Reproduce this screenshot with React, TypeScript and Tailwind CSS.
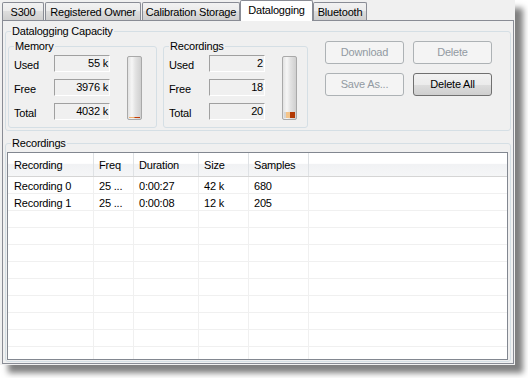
import type { ReactNode } from "react";

// Datalogging tab of a WinForms-style settings window (Win7 visual style)

const tabs = [
  { label: "S300", cls: "w-[42px]" },
  { label: "Registered Owner", cls: "w-[96px] ml-[1px]" },
  { label: "Calibration Storage", cls: "w-[98px] ml-[1px]" },
  { label: "Datalogging", cls: "w-[73px]", selected: true },
  { label: "Bluetooth", cls: "w-[54px]" },
];

const columns = [
  { label: "Recording", cls: "w-[86px] pl-[6px]" },
  { label: "Freq", cls: "w-[40px] pl-[5px]" },
  { label: "Duration", cls: "w-[65px] pl-[5px]" },
  { label: "Size", cls: "w-[50px] pl-[5px]" },
  { label: "Samples", cls: "w-[60px] pl-[5px]" },
];

const recordings = [
  ["Recording 0", "25 ...", "0:00:27", "42 k", "680"],
  ["Recording 1", "25 ...", "0:00:08", "12 k", "205"],
];

function GroupBox({ title, className, children }: { title: string; className: string; children?: ReactNode }) {
  return (
    <div className={`flex flex-col border border-[#d5dfe5] rounded-[3px] ${className}`}>
      <div className="-mt-[7px] ml-[5px] w-fit px-[1px] bg-[#f0f0f0] leading-[13px]">{title}</div>
      {children}
    </div>
  );
}

function ValueBox({ value }: { value: string }) {
  return (
    <div className="w-[56px] h-[17px] flex items-center justify-end pr-[1px] border-t border-l border-t-[#a0a0a0] border-l-[#a0a0a0] border-b border-r border-b-white border-r-white">
      {value}
    </div>
  );
}

function Level({ fill, low }: { fill: number; low?: boolean }) {
  return (
    <div className="ml-[17px] mt-[1px] w-[15px] h-[64px] rounded-[2px] border border-[#a9a9a9] bg-[linear-gradient(to_right,#e2e2e2,#f6f6f6_30%,#e4e4e4_55%,#cfcfcf)] flex flex-col justify-end p-[1px]">
      <div
        className={
          low
            ? "bg-[linear-gradient(to_right,#f0b070,#f0b070_45%,#c23a08_55%,#c23a08)]"
            : "bg-[linear-gradient(to_right,#d6d6d6,#d6d6d6_22%,#f4c48a_22%,#f4c48a_55%,#b33a05_55%,#b33a05)]"
        }
        style={{ height: fill }}
      />
    </div>
  );
}

function Counter({ title, rows, fill, low, className }: { title: string; rows: [string, string][]; fill: number; low?: boolean; className: string }) {
  return (
    <GroupBox title={title} className={`h-[82px] mt-[8px] ${className}`}>
      <div className="flex mt-[2px] pl-[5px]">
        <div className="flex flex-col gap-[7px]">
          {rows.map(([k, v]) => (
            <div key={k} className="flex items-center">
              <span className="w-[40px] pt-[3px]">{k}</span>
              <ValueBox value={v} />
            </div>
          ))}
        </div>
        <Level fill={fill} low={low} />
      </div>
    </GroupBox>
  );
}

function Button({ label, enabled }: { label: string; enabled?: boolean }) {
  return (
    <div
      className={
        enabled
          ? "w-[79px] h-[23px] flex items-center justify-center rounded-[3px] border border-[#707070] bg-[linear-gradient(#f2f2f2,#ebebeb_50%,#dddddd_50%,#cfcfcf)] text-black"
          : "w-[79px] h-[23px] flex items-center justify-center rounded-[3px] border border-[#adb2b5] bg-[#f4f4f4] text-[#929aa2]"
      }
    >
      {label}
    </div>
  );
}

export default function App() {
  const empty = Array.from({ length: 10 }, (_, i) => i);
  return (
    <div className="w-[528px] h-[378px] bg-white font-['Liberation_Sans',Arial,sans-serif] text-[11px] tracking-[-0.2px] text-black leading-[13px]">
      <div className="w-[515px] h-[365px] bg-[#f0f0f0] shadow-[8px_8px_6px_rgba(0,0,0,0.5)] flex flex-col pl-[2px]">
        {/* tab strip */}
        <div className="h-[20px] flex items-end">
          {tabs.map((t) =>
            t.selected ? (
              <div key={t.label} className={`relative z-10 -mb-[1px] h-[21px] ${t.cls} bg-white border border-b-0 border-[#898c95] rounded-t-[2px] flex items-center justify-center pb-[1px]`}>
                {t.label}
              </div>
            ) : (
              <div key={t.label} className={`h-[18px] ${t.cls} border border-b-0 border-[#898c95] rounded-t-[2px] bg-[linear-gradient(#f2f2f2,#ebebeb_50%,#dddddd_50%,#cfcfcf)] flex items-center justify-center pt-[1px]`}>
                {t.label}
              </div>
            )
          )}
        </div>

        {/* tab page */}
        <div className="w-[512px] h-[344px] border border-[#898c95] flex flex-col px-[2px]">
          <GroupBox title="Datalogging Capacity" className="mt-[10px] h-[100px]">
            <div className="flex items-start">
              <Counter
                title="Memory"
                className="ml-[2px] w-[149px]"
                rows={[["Used", "55 k"], ["Free", "3976 k"], ["Total", "4032 k"]]}
                fill={1}
                low
              />
              <Counter
                title="Recordings"
                className="ml-[6px] w-[145px]"
                rows={[["Used", "2"], ["Free", "18"], ["Total", "20"]]}
                fill={6}
              />
              <div className="ml-[17px] mt-[3px] grid grid-cols-2 gap-x-[9px] gap-y-[9px]">
                <Button label="Download" />
                <Button label="Delete" />
                <Button label="Save As..." />
                <Button label="Delete All" enabled />
              </div>
            </div>
          </GroupBox>

          <GroupBox title="Recordings" className="mt-[12px] h-[219px]">
            <div className="mt-[2px] ml-[1px] mr-[2px] h-[208px] border border-[#828790] bg-white overflow-hidden flex flex-col">
              <div className="h-[24px] shrink-0 flex border-b border-[#d5d5d5] bg-[linear-gradient(#ffffff,#ffffff_45%,#f1f2f4_50%,#f5f6f7)]">
                {columns.map((c) => (
                  <div key={c.label} className={`${c.cls} shrink-0 border-r border-[#dfe2e5] flex items-center pt-[2px]`}>
                    {c.label}
                  </div>
                ))}
                <div className="flex-1" />
              </div>
              {recordings.map((r) => (
                <div key={r[0]} className="h-[17px] shrink-0 flex border-b border-[#f0f0f0]">
                  {columns.map((c, i) => (
                    <div key={c.label} className={`${c.cls} shrink-0 border-r border-[#f0f0f0] flex items-center pt-[3px] whitespace-nowrap`}>
                      {r[i]}
                    </div>
                  ))}
                  <div className="flex-1" />
                </div>
              ))}
              {empty.map((i) => (
                <div key={i} className="h-[17px] shrink-0 flex border-b border-[#f0f0f0]">
                  {columns.map((c) => (
                    <div key={c.label} className={`${c.cls} shrink-0 border-r border-[#f0f0f0]`} />
                  ))}
                  <div className="flex-1" />
                </div>
              ))}
            </div>
          </GroupBox>
        </div>
      </div>
    </div>
  );
}
